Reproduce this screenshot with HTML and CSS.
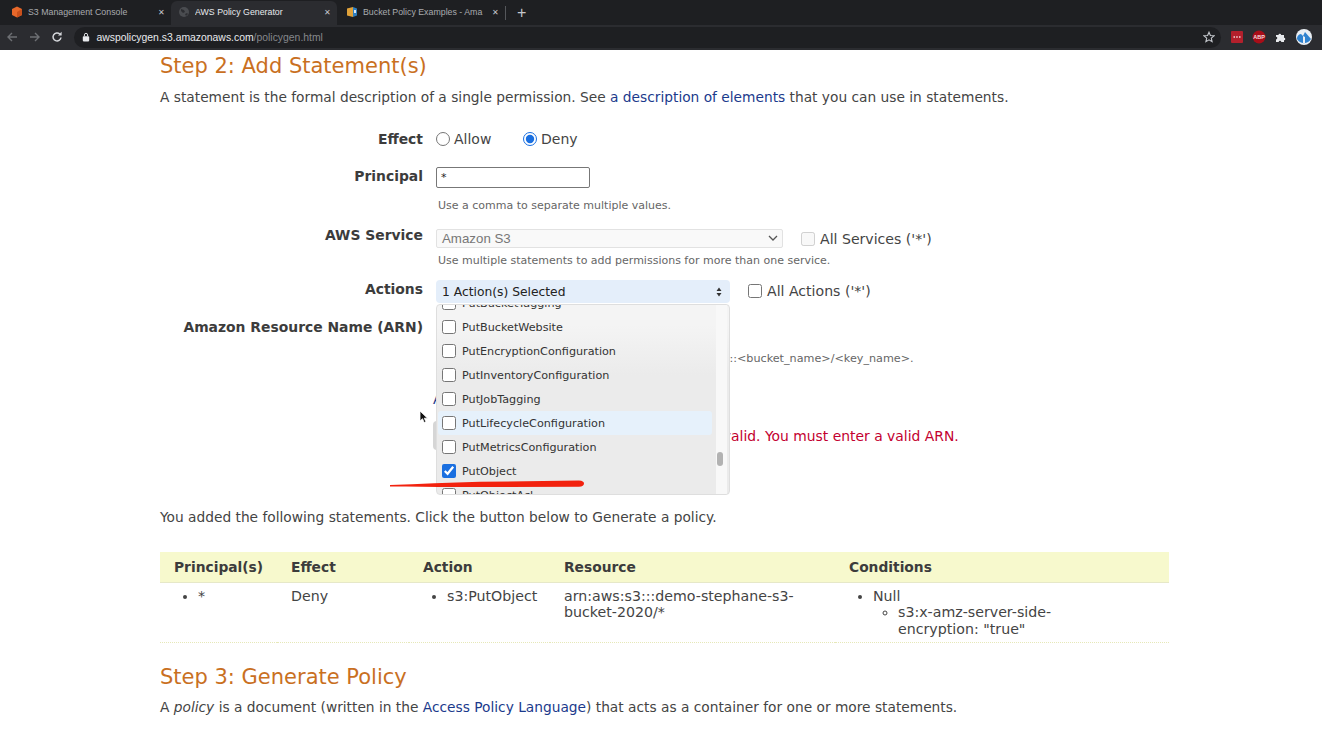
FILE: index.html
```html
<!DOCTYPE html>
<html lang="en">
<head>
    <meta charset="UTF-8">
    <title>AWS Policy Generator</title>
    <link rel="stylesheet" href="styles.css">
</head>
<body>

    <div class="browser">
        <div class="tabbar">
            <div class="tab tab-first">
                <svg class="favicon" viewBox="0 0 12 12"><path d="M6 0.5 11 3v6L6 11.5 1 9V3z" fill="#e8682a"/><path d="M6 6v5.5L11 9V3z" fill="#c9501c"/></svg>
                <span class="tab-title">S3 Management Console</span>
                <span class="tab-close">✕</span>
            </div>
            <div class="tab active">
                <svg class="favicon" viewBox="0 0 12 12"><circle cx="6" cy="6" r="5" fill="#4a4c50"/><path d="M3 3l3 1 1 2-2 1-2-2zM7 8l2-1 1 1-2 2z" fill="#2c2d31"/></svg>
                <span class="tab-title">AWS Policy Generator</span>
                <span class="tab-close">✕</span>
            </div>
            <div class="tab tab-last">
                <svg class="favicon" viewBox="0 0 12 12"><path d="M1 2.5 7 1v10l-6-1.5z" fill="#e0a23a"/><path d="M7 1l4 1.5v7L7 11z" fill="#2f7fc1"/><rect x="8" y="4" width="2" height="3" fill="#dfe9f2"/></svg>
                <span class="tab-title">Bucket Policy Examples - Ama</span>
                <span class="tab-close">✕</span>
            </div>
            <span class="tab-sep"></span>
            <span class="tab-new">+</span>
        </div>
        <div class="toolbar">
            <svg class="nav dim" viewBox="0 0 12 12"><path d="M11 6H2M6 2 2 6l4 4" fill="none" stroke="currentColor" stroke-width="1.4"/></svg>
            <svg class="nav dim" viewBox="0 0 12 12"><path d="M1 6h9M6 2l4 4-4 4" fill="none" stroke="currentColor" stroke-width="1.4"/></svg>
            <svg class="nav" viewBox="0 0 12 12"><path d="M10 6.5A4 4 0 1 1 8.8 3" fill="none" stroke="currentColor" stroke-width="1.5"/><path d="M7 4.4h3.6V0.8z" fill="currentColor"/></svg>
            <div class="omnibox">
                <svg class="lock" viewBox="0 0 10 12"><rect x="1" y="5" width="8" height="6.5" rx="1" fill="#e8eaed"/><path d="M3 5V3.4a2 2 0 0 1 4 0V5" fill="none" stroke="#e8eaed" stroke-width="1.2"/></svg>
                <span class="url">awspolicygen.s3.amazonaws.com<span class="url-path">/policygen.html</span></span>
                <svg class="star" viewBox="0 0 12 12"><path d="M6 1.2 7.4 4.5 11 4.8 8.3 7.1 9.1 10.7 6 8.8 2.9 10.7 3.7 7.1 1 4.8 4.6 4.5z" fill="none" stroke="#c4c7cc" stroke-width="1.1"/></svg>
            </div>
            <div class="extensions">
                <svg class="ext" viewBox="0 0 12 12"><rect width="12" height="12" rx="1" fill="#b3202c"/><path d="M2.5 6h1.5M5.2 6h1.5M8 6h1.5" stroke="#f3d9db" stroke-width="1.6"/></svg>
                <svg class="ext abp" viewBox="0 0 14 14"><circle cx="7" cy="7" r="6.5" fill="#a80d18"/><text x="7" y="9" text-anchor="middle" class="abp-text">ABP</text></svg>
                <svg class="ext" viewBox="0 0 12 12"><path d="M1 4h2.5a1.3 1.3 0 1 1 2.6 0H9v2.7a1.3 1.3 0 1 1 0 2.6V11H6.3a1.3 1.3 0 1 0-2.6 0H1V8.400a1.3 1.3 0 1 0 0-2.600z" fill="#e8eaed"/></svg>
                <svg class="avatar" viewBox="0 0 16 16"><circle cx="8" cy="8" r="8" fill="#e9eef3"/><path d="M1 10a5 5 0 0 1 4-5l2 2 2-4 6 7a8 8 0 0 1-14 0z" fill="#2f82cf"/><path d="M7 14V7l2 1v6z" fill="#e9eef3"/></svg>
            </div>
        </div>
    </div>

    <div class="page">
        <h2>Step 2: Add Statement(s)</h2>
        <p class="intro">A statement is the formal description of a single permission. See <a href="#">a description of elements</a> that you can use in statements.</p>

        <div class="form-row row-effect">
            <label class="form-label">Effect</label>
            <div class="field">
                <label class="radio radio-allow"><input type="radio" name="effect">Allow</label>
                <label class="radio"><input type="radio" name="effect" checked>Deny</label>
            </div>
        </div>

        <div class="form-row row-principal">
            <label class="form-label">Principal</label>
            <div class="field"><input class="text-input" type="text" value="*"></div>
        </div>
        <div class="hint hint-principal">Use a comma to separate multiple values.</div>

        <div class="form-row row-service">
            <label class="form-label">AWS Service</label>
            <div class="field">
                <div class="select-service">
                    <span>Amazon S3</span>
                    <svg class="chevron" viewBox="0 0 10 6"><path d="M1 1l4 4 4-4" fill="none" stroke="#555" stroke-width="1.3"/></svg>
                </div>
                <label class="check-all check-services"><input type="checkbox" disabled>All Services ('*')</label>
            </div>
        </div>
        <div class="hint hint-service">Use multiple statements to add permissions for more than one service.</div>

        <div class="form-row row-actions">
            <label class="form-label">Actions</label>
            <div class="field">
                <div class="select-actions">
                    <span>1 Action(s) Selected</span>
                    <svg class="updown" viewBox="0 0 6 10"><path d="M3 0.500 5.500 4h-5zM3 9.500 0.500 6h5z" fill="#333"/></svg>
                </div>
                <label class="check-all check-actions"><input type="checkbox">All Actions ('*')</label>

                <div class="dropdown">
                    <ul class="action-list">
                        <li><input type="checkbox">PutBucketTagging</li>
                        <li><input type="checkbox">PutBucketWebsite</li>
                        <li><input type="checkbox">PutEncryptionConfiguration</li>
                        <li><input type="checkbox">PutInventoryConfiguration</li>
                        <li><input type="checkbox">PutJobTagging</li>
                        <li class="hovered"><input type="checkbox">PutLifecycleConfiguration</li>
                        <li><input type="checkbox">PutMetricsConfiguration</li>
                        <li><input type="checkbox" checked>PutObject</li>
                        <li><input type="checkbox">PutObjectAcl</li>
                    </ul>
                    <div class="scroll-track"><div class="scroll-thumb"></div></div>
                </div>
                <svg class="scribble" viewBox="0 0 196 12"><path d="M1 7C30 6 60 4.500 91 3.800L190 2.600Q195 3 195 5.500 195 8.500 190 8.800L91 9C60 9.200 30 9 1 8.600Z" fill="#f2220e"/></svg>
            </div>
        </div>

        <div class="form-row row-arn">
            <label class="form-label">Amazon Resource Name (ARN)</label>
            <div class="field"><input class="text-input arn-input" type="text"></div>
        </div>
        <div class="hint hint-arn">ARN should follow the following format: arn:aws:s3:::&lt;bucket_name&gt;/&lt;key_name&gt;.</div>

        <div class="add-conditions"><a href="#">Add Conditions (Optional)</a></div>

        <div class="add-row">
            <button class="add-button" type="button">Add Statement</button>
            <span class="error">Resource is not valid. You must enter a valid ARN.</span>
        </div>

        <p class="added">You added the following statements. Click the button below to Generate a policy.</p>

        <table class="statements">
            <colgroup>
                <col class="col-principal"><col class="col-effect"><col class="col-action"><col class="col-resource"><col>
            </colgroup>
            <thead>
                <tr>
                    <th>Principal(s)</th>
                    <th>Effect</th>
                    <th>Action</th>
                    <th>Resource</th>
                    <th>Conditions</th>
                </tr>
            </thead>
            <tbody>
                <tr>
                    <td><ul><li>*</li></ul></td>
                    <td>Deny</td>
                    <td><ul><li>s3:PutObject</li></ul></td>
                    <td>arn:aws:s3:::demo-stephane-s3-<br>bucket-2020/*</td>
                    <td><ul><li>Null<ul><li>s3:x-amz-server-side-<br>encryption: "true"</li></ul></li></ul></td>
                </tr>
            </tbody>
        </table>

        <h2 class="step-3">Step 3: Generate Policy</h2>
        <p class="intro">A <em>policy</em> is a document (written in the <a href="#">Access Policy Language</a>) that acts as a container for one or more statements.</p>
    </div>

    <svg class="cursor" viewBox="0 0 10 14"><path d="M1 1v10l2.500-2.300L5.200 12.600l1.700-.8L5.300 8.200H8.500z" fill="#111" stroke="#fff" stroke-width="0.800"/></svg>

</body>
</html>
```

FILE: styles.css
```css
* {
    box-sizing: border-box;
}

html, body {
    height: 730px;
    overflow: hidden;
}

body {
    font-family: "DejaVu Sans", Verdana, sans-serif;
    font-size: 13.75px;
    background-color: #fff;
    color: #444;
    margin: 0;
}

a {
    color: #1b3a8c;
    text-decoration: none;
}

/* browser chrome */

.browser {
    height: 50px;
    font-family: "Liberation Sans", Arial, sans-serif;
    background-color: #2b2c30;
}

.tabbar {
    height: 25px;
    display: flex;
    align-items: flex-end;
    background-color: #1e1f22;
}

.tab {
    width: 166px;
    height: 24px;
    display: flex;
    align-items: center;
    padding: 0 0 2px 7px;
    font-size: 8.8px;
    color: #a9abaf;
    border-radius: 6px 6px 0 0;
}

.tab-first {
    width: 171px;
    padding-left: 11px;
}

.tab-last {
    width: 168px;
    padding-left: 9px;
}

.tab.active {
    background-color: #2b2c30;
    color: #e8eaed;
}

.favicon {
    width: 12px;
    height: 12px;
    margin-right: 5px;
    flex-shrink: 0;
}

.tab-title {
    flex: 1;
    white-space: nowrap;
    overflow: hidden;
}

.tab-close {
    font-size: 8px;
    width: 20px;
    text-align: center;
    color: #c4c7cc;
}

.tab-sep {
    width: 1px;
    height: 14px;
    margin: 0 0 5px 0;
    background-color: #55575b;
}

.tab-new {
    margin: 0 0 3px 11px;
    font-size: 16px;
    line-height: 18px;
    color: #c4c7cc;
}

.toolbar {
    height: 25px;
    display: flex;
    align-items: center;
    color: #d6d8dc;
    padding: 0 10px 1px 6px;
}

.nav {
    width: 12px;
    height: 12px;
    margin-right: 10.500px;
    flex-shrink: 0;
}

.nav.dim {
    color: #6d6f73;
}

.omnibox {
    margin-left: 0;
    width: 1147px;
    height: 21px;
    border-radius: 11px;
    background-color: #1e1f22;
    display: flex;
    align-items: center;
    padding: 0 6px 0 8px;
}

.lock {
    width: 8px;
    height: 10px;
    margin-right: 7px;
}

.url {
    flex: 1;
    font-size: 10.4px;
    color: #e8eaed;
}

.url-path {
    color: #85878b;
}

.star {
    width: 12px;
    height: 12px;
}

.extensions {
    flex: 1;
    display: flex;
    align-items: center;
    justify-content: space-between;
    padding-left: 10px;
}

.ext {
    width: 12px;
    height: 12px;
}

.abp {
    width: 14px;
    height: 14px;
}

.abp-text {
    font-size: 5.500px;
    font-weight: bold;
    fill: #f4dcdc;
}

.avatar {
    width: 16px;
    height: 16px;
}

/* page */

.page {
    width: 1009px;
    margin-left: 160px;
}

h2 {
    margin: 3px 0 0;
    font-size: 21px;
    line-height: 26px;
    font-weight: normal;
    color: #c9701f;
}

.intro {
    margin: 8px 0 0;
    line-height: 20px;
}

.form-row {
    display: grid;
    grid-template-columns: 263px 1fr;
    column-gap: 13px;
    align-items: center;
}

.form-label {
    padding-bottom: 4px;
    text-align: right;
    font-weight: bold;
    font-size: 13.9px;
    color: #3c3c3c;
}

.field {
    position: relative;
    display: flex;
    align-items: center;
}

.row-effect {
    height: 22px;
    margin-top: 21px;
}

.row-effect .form-label {
    padding-bottom: 0;
}

.row-service .form-label,
.row-actions .form-label {
    padding-bottom: 6px;
}

.radio {
    display: flex;
    align-items: center;
    gap: 4px;
    font-size: 14px;
}

.radio-allow {
    width: 87px;
}

.radio input {
    width: 14px;
    height: 14px;
    margin: 0;
    accent-color: #1a6fe0;
}

.row-principal {
    margin-top: 17px;
    height: 21px;
}

.text-input {
    width: 154px;
    height: 21px;
    padding: 0 4px;
    border: 1px solid #777;
    border-radius: 2px;
    font-family: "DejaVu Sans", Verdana, sans-serif;
    font-size: 11px;
    color: #222;
}

.hint {
    margin-left: 278px;
    font-size: 11px;
    line-height: 14px;
    color: #666;
}

.hint-principal {
    margin-top: 11px;
}

.row-service {
    margin-top: 14px;
    height: 19px;
}

.select-service {
    width: 347px;
    height: 19px;
    display: flex;
    align-items: center;
    justify-content: space-between;
    padding: 0 4px 0 5px;
    border: 1px solid #e2e2e2;
    border-radius: 2px;
    background-color: #f9f9f9;
    font-family: "Liberation Sans", Arial, sans-serif;
    font-size: 13.3px;
    color: #777;
}

.chevron {
    width: 10px;
    height: 6px;
}

.check-all {
    display: flex;
    align-items: center;
    gap: 5px;
    margin-left: 18px;
    font-size: 14.1px;
}

.check-all input {
    width: 14px;
    height: 14px;
    margin: 0;
}

.check-services {
    margin-top: 2px;
}

.check-actions {
    margin-bottom: 2px;
}

.hint-service {
    margin-top: 8px;
}

.row-actions {
    margin-top: 12px;
    height: 23px;
}

.select-actions {
    width: 294px;
    height: 23px;
    display: flex;
    align-items: center;
    justify-content: space-between;
    padding: 0 8px 0 6px;
    border-radius: 4px;
    background-color: #e4eefa;
    font-size: 12.3px;
    color: #222;
}

.updown {
    width: 6px;
    height: 10px;
}

/* open action list, lies over the rest of the form */

.dropdown {
    position: absolute;
    left: 0;
    top: 24px;
    width: 294px;
    height: 191px;
    display: flex;
    overflow: hidden;
    border: 1px solid #dedede;
    border-radius: 4px;
    background: linear-gradient(#f4f4f4 20px, #ebebeb 70px);
    z-index: 2;
}

.action-list {
    flex: 1;
    list-style: none;
    margin: -14px 0 0;
    padding: 0 4px 0 1px;
    font-size: 11.2px;
    color: #333;
}

.action-list li {
    height: 24px;
    display: flex;
    align-items: center;
    gap: 6px;
    padding-left: 4px;
    border-radius: 3px;
}

.action-list li.hovered {
    background-color: #e6f1fb;
}

.action-list input {
    width: 14px;
    height: 14px;
    margin: 0;
    accent-color: #1a6fe0;
}

.scroll-track {
    width: 11px;
    margin-right: 2px;
    padding-top: 147px;
    background-color: #f8f8f8;
}

.scroll-thumb {
    width: 6px;
    height: 14px;
    margin-left: 1px;
    border-radius: 3px;
    background-color: #b2b2b2;
}

.scribble {
    position: absolute;
    left: -47px;
    top: 198px;
    width: 196px;
    height: 12px;
    z-index: 3;
}

.row-arn {
    margin-top: 15px;
    height: 20px;
}

.arn-input {
    width: 280px;
}

.hint-arn {
    margin: 14px 0 0 280px;
    font-size: 11.2px;
}

.add-conditions {
    margin: 23px 0 0 273px;
    line-height: 20px;
}

.add-row {
    display: flex;
    align-items: center;
    height: 29px;
    margin: 12px 0 0 273px;
}

.add-button {
    width: 100px;
    height: 29px;
    border: none;
    border-radius: 4px;
    background-color: #d6d6d6;
    font-size: 12px;
    color: #444;
}

.error {
    margin-left: 79px;
    font-size: 13.9px;
    color: #c3002f;
    white-space: nowrap;
}

.added {
    margin: 57px 0 0;
    line-height: 20px;
}

/* statements table */

.statements {
    width: 1009px;
    margin-top: 25px;
    table-layout: fixed;
    border-collapse: collapse;
    border-bottom: 1px dotted #e6e8b8;
}

.col-principal {
    width: 117px;
}

.col-effect {
    width: 132px;
}

.col-action {
    width: 141px;
}

.col-resource {
    width: 285px;
}

.statements th {
    height: 30px;
    padding: 0 14px;
    text-align: left;
    font-size: 13.8px;
    color: #3c3c3c;
    background-color: #f7f9cd;
    border-bottom: 1px solid #e6e8c8;
}

.statements td {
    height: 60px;
    padding: 5px 14px 0;
    vertical-align: top;
    font-size: 14.2px;
    line-height: 16.5px;
}

.statements ul {
    margin: 0;
    padding-left: 24px;
}

.statements td ul ul {
    padding-left: 25px;
}

.step-3 {
    margin-top: 21px;
}

.step-3 + .intro {
    margin-top: 7px;
}

.cursor {
    position: absolute;
    left: 419px;
    top: 410px;
    width: 10px;
    height: 14px;
    z-index: 5;
}
```
